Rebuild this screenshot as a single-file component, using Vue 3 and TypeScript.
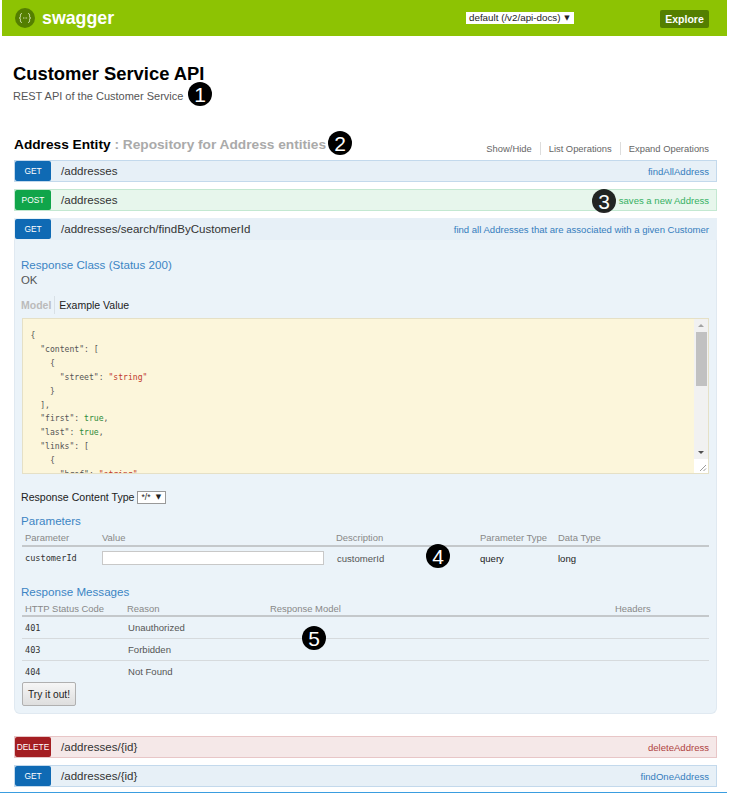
<script setup lang="ts">
type Method = 'get' | 'post' | 'delete'

interface Token {
  text: string
  kind?: 'str' | 'bool'
}

const codeLines: Token[][] = [
  [{ text: '{' }],
  [{ text: '  "content": [' }],
  [{ text: '    {' }],
  [{ text: '      "street": ' }, { text: '"string"', kind: 'str' }],
  [{ text: '    }' }],
  [{ text: '  ],' }],
  [{ text: '  "first": ' }, { text: 'true', kind: 'bool' }, { text: ',' }],
  [{ text: '  "last": ' }, { text: 'true', kind: 'bool' }, { text: ',' }],
  [{ text: '  "links": [' }],
  [{ text: '    {' }],
  [{ text: '      "href": ' }, { text: '"string"', kind: 'str' }],
]

const messages = [
  { code: '401', reason: 'Unauthorized' },
  { code: '403', reason: 'Forbidden' },
  { code: '404', reason: 'Not Found' },
]

const topOps: { method: Method; path: string; summary: string; mark?: string }[] = [
  { method: 'get', path: '/addresses', summary: 'findAllAddress' },
  { method: 'post', path: '/addresses', summary: 'saves a new Address', mark: '3' },
]
</script>

<template>
  <div class="page">
    <header class="topbar">
      <div class="brand">
        <span class="logo">
          <svg width="20" height="20" viewBox="0 0 20 20">
            <circle cx="10" cy="10" r="10" fill="#547f00" />
            <path
              d="M7 5.6c-1.4 0-1.6.7-1.6 1.7v1.4c0 .8-.4 1.2-1 1.3.6.1 1 .5 1 1.3v1.4c0 1 .2 1.7 1.6 1.7M13 5.6c1.4 0 1.6.7 1.6 1.7v1.4c0 .8.4 1.2 1 1.3-.6.1-1 .5-1 1.3v1.4c0 1-.2 1.7-1.6 1.7"
              fill="none"
              stroke="#e4efcb"
              stroke-width="0.9"
            />
            <path d="M8 10h.9M9.6 10h.9M11.2 10h.9" stroke="#e4efcb" stroke-width="0.9" />
          </svg>
        </span>
        <span class="brand-name">swagger</span>
      </div>
      <div class="spec-select">default (/v2/api-docs) <span class="arrow">▼</span></div>
      <div class="explore">Explore</div>
    </header>

    <section class="info">
      <h1>Customer Service API</h1>
      <p>REST API of the Customer Service <span class="mark mark-info">1</span></p>
    </section>

    <section class="resource">
      <div class="resource-head">
        <h2>
          Address Entity <span class="resource-desc">: Repository for Address entities</span>
          <span class="mark mark-head">2</span>
        </h2>
        <ul class="resource-links">
          <li>Show/Hide</li>
          <li>List Operations</li>
          <li>Expand Operations</li>
        </ul>
      </div>

      <div v-for="op in topOps" :key="op.method" class="op-row" :class="op.method">
        <span class="verb">{{ op.method.toUpperCase() }}</span>
        <span class="path">{{ op.path }}</span>
        <span class="summary">
          <span v-if="op.mark" class="mark mark-op">{{ op.mark }}</span>
          {{ op.summary }}
        </span>
      </div>

      <div class="op-row get expanded">
        <span class="verb">GET</span>
        <span class="path">/addresses/search/findByCustomerId</span>
        <span class="summary">find all Addresses that are associated with a given Customer</span>
      </div>
      <div class="panel">
        <h4 class="first-title">Response Class (Status 200)</h4>
        <div class="ok">OK</div>
        <div class="model-tabs">
          <span class="tab-off">Model</span>
          <span class="tab-on">Example Value</span>
        </div>
        <div class="sample">
          <pre class="code"><template v-for="(line, i) in codeLines" :key="i"><span v-for="(t, j) in line" :key="j" :class="t.kind">{{ t.text }}</span>{{ '\n' }}</template></pre>
          <div class="scrollbar">
            <span class="sb-up"></span>
            <div class="sb-track"><div class="sb-thumb"></div></div>
            <span class="sb-down"></span>
            <div class="sb-corner">
              <svg width="13" height="13" viewBox="0 0 13 13">
                <path d="M6 12l6-6M9.5 12l2.5-2.5" stroke="#9a9a9a" stroke-width="1" />
              </svg>
            </div>
          </div>
        </div>
        <div class="content-type">
          Response Content Type
          <span class="mini-select">*/* <span class="arrow">▼</span></span>
        </div>

        <h4 class="params-title">Parameters</h4>
        <div class="table-wrap">
          <table class="params">
            <thead>
              <tr>
                <th>Parameter</th>
                <th>Value</th>
                <th>Description</th>
                <th>Parameter Type</th>
                <th>Data Type</th>
              </tr>
            </thead>
            <tbody>
              <tr>
                <td class="mono">customerId</td>
                <td><input class="value-input" type="text" aria-label="customerId" /></td>
                <td class="cell-desc">customerId</td>
                <td class="cell-dark">query</td>
                <td class="cell-dark">long</td>
              </tr>
            </tbody>
          </table>
          <span class="mark mark-params">4</span>
        </div>

        <h4 class="messages-title">Response Messages</h4>
        <div class="table-wrap">
          <table class="responses">
            <thead>
              <tr>
                <th>HTTP Status Code</th>
                <th>Reason</th>
                <th>Response Model</th>
                <th>Headers</th>
              </tr>
            </thead>
            <tbody>
              <tr v-for="m in messages" :key="m.code">
                <td class="mono">{{ m.code }}</td>
                <td class="cell-reason">{{ m.reason }}</td>
                <td></td>
                <td></td>
              </tr>
            </tbody>
          </table>
          <span class="mark mark-messages">5</span>
        </div>
        <button class="try" type="button">Try it out!</button>
      </div>

      <div class="op-row delete after-panel">
        <span class="verb">DELETE</span>
        <span class="path">/addresses/{id}</span>
        <span class="summary">deleteAddress</span>
      </div>
      <div class="op-row get">
        <span class="verb">GET</span>
        <span class="path">/addresses/{id}</span>
        <span class="summary">findOneAddress</span>
      </div>
    </section>
    <div class="bottom-line"></div>
  </div>
</template>

<style>
html,
body {
  background: #fff;
  overflow: hidden;
}
</style>

<style scoped>
.page {
  width: 731px;
  height: 793px;
  overflow: hidden;
  position: relative;
  font-family: 'Liberation Sans', Arial, sans-serif;
  color: #333;
}

.topbar {
  margin-left: 2px;
  width: 725px;
  height: 36px;
  background: #8dc303;
  display: flex;
  align-items: center;
}

.brand {
  display: flex;
  align-items: center;
  margin-left: 13px;
  width: 451px;
}

.logo {
  display: flex;
  margin-right: 7px;
}

.brand-name {
  color: #fff;
  font-size: 17.8px;
  font-weight: 700;
}

.spec-select {
  width: 108px;
  height: 12px;
  margin-top: -1px;
  background: #fff;
  font-size: 9.8px;
  line-height: 12px;
  color: #222;
  padding-left: 3px;
  box-sizing: border-box;
  white-space: nowrap;
}

.arrow {
  margin-left: 1px;
  font-family: 'DejaVu Sans', sans-serif;
  font-size: 7px;
  vertical-align: 1px;
}

.explore {
  margin-left: 86px;
  width: 49px;
  height: 18px;
  margin-top: 1px;
  border-radius: 2px;
  background: #547f00;
  color: #fff;
  font-size: 10.5px;
  font-weight: 700;
  line-height: 18px;
  text-align: center;
}

.info {
  padding: 28px 0 0 13px;
}

.info h1 {
  margin: 0;
  font-size: 18.4px;
  line-height: 20px;
  font-weight: 700;
  color: #000;
}

.info p {
  margin: 5px 0 0;
  font-size: 11px;
  line-height: 14px;
  color: #555;
}

.mark {
  display: inline-flex;
  align-items: center;
  justify-content: center;
  width: 24px;
  height: 24px;
  border-radius: 50%;
  background: #000;
  color: #fff;
  font-family: 'Liberation Sans', Arial, sans-serif;
  font-size: 21px;
  font-weight: 400;
  line-height: 1;
}

.mark-info {
  position: absolute;
  left: 188px;
  top: 82px;
}

.resource {
  margin: 0 14px;
  width: 703px;
  padding-top: 28px;
}

.resource-head {
  display: flex;
  justify-content: space-between;
  align-items: flex-end;
  height: 23px;
  padding-bottom: 6px;
}

.resource-head h2 {
  margin: 0;
  font-size: 13.7px;
  line-height: 18px;
  font-weight: 700;
  color: #000;
  white-space: nowrap;
}

.resource-desc {
  color: #aaa;
}

.mark-head {
  position: absolute;
  left: 328px;
  top: 131px;
}

.resource-links {
  display: flex;
  list-style: none;
  margin: 0 8px -1px 0;
  padding: 0;
  font-size: 9.4px;
  line-height: 13px;
  color: #666;
}

.resource-links li {
  padding: 0 8px;
  border-right: 1px solid #ddd;
}

.resource-links li:last-child {
  padding-right: 0;
  border-right: 0;
}

.op-row {
  display: flex;
  align-items: center;
  box-sizing: border-box;
  height: 22px;
  margin-bottom: 7px;
  border: 1px solid;
  position: relative;
}

.op-row.get {
  background: #e7f0f7;
  border-color: #c3d9ec;
  color: #0f6ab4;
}

.op-row.post {
  background: #e7f6ec;
  border-color: #c3e8d1;
  color: #10a54a;
}

.op-row.delete {
  background: #f5e8e8;
  border-color: #e8c6c7;
  color: #a41e22;
}

.op-row.expanded {
  margin-bottom: 0;
  border-color: #e7f0f7;
}

.op-row.after-panel {
  margin-top: 22px;
}

.verb {
  width: 36px;
  height: 20px;
  flex: none;
  box-sizing: border-box;
  border-radius: 2px;
  font-size: 8.4px;
  line-height: 20px;
  text-align: center;
  color: #fff;
}

.get .verb {
  background: #0f6ab4;
}

.post .verb {
  background: #10a54a;
}

.delete .verb {
  background: #a41e22;
}

.path {
  margin-left: 10px;
  font-size: 11.55px;
  color: #333;
}

.summary {
  margin-left: auto;
  margin-right: 7px;
  font-size: 9.55px;
  opacity: 0.85;
}

.mark-op {
  position: absolute;
  left: 577px;
  top: -1px;
}

.panel {
  box-sizing: border-box;
  height: 474px;
  padding: 0 7px;
  background: #ebf3f9;
  border: 1px solid #e0e9f1;
  border-top: 0;
  border-radius: 0 0 6px 6px;
}

h4 {
  margin: 0 0 0 -1px;
  font-size: 11.6px;
  line-height: 14px;
  font-weight: 400;
  color: #3c85c4;
}

.first-title {
  padding-top: 18px;
}

.ok {
  margin-top: 1px;
  margin-left: -1px;
  font-size: 11.4px;
  line-height: 14px;
  color: #555;
}

.model-tabs {
  display: flex;
  align-items: center;
  margin-top: 9px;
  margin-left: -1px;
  height: 18px;
  font-size: 10.5px;
}

.tab-off {
  color: #bbb;
  font-weight: 700;
  padding-right: 3px;
  border-right: 1px solid #d8e0e6;
  line-height: 18px;
}

.tab-on {
  color: #222;
  padding-left: 4px;
}

.sample {
  display: flex;
  box-sizing: border-box;
  margin-top: 4px;
  width: 687px;
  height: 156px;
  background: #fcf6db;
  border: 1px solid #e5e0c6;
  overflow: hidden;
}

.code {
  flex: 1;
  margin: 0;
  padding: 10px 0 0 7.5px;
  font-family: 'DejaVu Sans Mono', 'Liberation Mono', monospace;
  font-size: 8.1px;
  line-height: 13.9px;
  color: #555;
  height: 144px;
  overflow: hidden;
}

.code .str {
  color: #c0392b;
}

.code .bool {
  color: #2e8b3a;
}

.scrollbar {
  flex: none;
  width: 14px;
  display: flex;
  flex-direction: column;
  align-items: center;
  background: #f1f1f1;
}

.sb-up,
.sb-down {
  flex: none;
  width: 0;
  height: 0;
  margin: 5px 0;
  border-left: 3px solid transparent;
  border-right: 3px solid transparent;
}

.sb-up {
  border-bottom: 3px solid #a3a3a3;
}

.sb-down {
  border-top: 3px solid #505050;
}

.sb-track {
  flex: 1;
  width: 100%;
}

.sb-thumb {
  width: 11px;
  height: 54px;
  margin: 0 auto;
  background: #c1c1c1;
}

.sb-corner {
  flex: none;
  width: 14px;
  height: 14px;
  background: #fff;
}

.sb-corner svg {
  display: block;
}

.content-type {
  display: flex;
  align-items: center;
  gap: 3px;
  margin-top: 16px;
  margin-left: -1px;
  height: 14px;
  font-size: 10.6px;
  color: #222;
}

.mini-select {
  box-sizing: border-box;
  width: 29px;
  height: 13px;
  padding-left: 3px;
  border: 1px solid #999;
  background: #fff;
  font-size: 8.5px;
  line-height: 11px;
}

.mini-select .arrow {
  margin-left: 3px;
}

.params-title {
  margin-top: 10px;
  margin-bottom: 2px;
}

.table-wrap {
  position: relative;
}

table {
  width: 100%;
  table-layout: fixed;
  border-collapse: collapse;
}

th {
  box-sizing: border-box;
  height: 16px;
  padding: 0 0 0 3px;
  border-bottom: 2px solid #c4c8cb;
  text-align: left;
  font-size: 9.45px;
  line-height: 12px;
  font-weight: 400;
  color: #888;
}

td {
  padding: 0 0 0 3px;
  font-size: 9.55px;
  color: #555;
}

.params th:nth-child(1) {
  width: 77px;
}

.params th:nth-child(2) {
  width: 234px;
}

.params th:nth-child(3) {
  width: 144px;
}

.params th:nth-child(4) {
  width: 78px;
}

.params td {
  height: 22px;
}

.mono {
  font-family: 'DejaVu Sans Mono', 'Liberation Mono', monospace;
  font-size: 8.6px;
  color: #333;
}

.value-input {
  display: block;
  box-sizing: border-box;
  width: 222px;
  height: 14px;
  margin: 0;
  border: 1px solid #c8c8c8;
  background: #fff;
  padding: 0;
  outline: 0;
}

.cell-desc {
  padding-left: 4px;
}

.cell-dark {
  color: #222;
}

.messages-title {
  margin-top: 16px;
  margin-bottom: 2px;
}

.responses th {
  height: 15px;
  padding-top: 1px;
}

.responses th:nth-child(1) {
  width: 102px;
}

.responses th:nth-child(2) {
  width: 143px;
}

.responses th:nth-child(3) {
  width: 345px;
}

.responses td {
  height: 21px;
  border-bottom: 1px solid #d6dadd;
}

.responses tr:last-child td {
  border-bottom: 0;
}

.cell-reason {
  padding-left: 4px;
}

.mark-params {
  position: absolute;
  left: 404px;
  top: 14px;
}

.mark-messages {
  position: absolute;
  left: 280px;
  top: 25px;
}

.try {
  display: block;
  box-sizing: border-box;
  width: 54px;
  height: 24px;
  margin-top: 0;
  padding: 0;
  border: 1px solid #b0b0b0;
  border-radius: 2px;
  background: linear-gradient(#f6f6f6, #dedede);
  font-family: inherit;
  font-size: 10.2px;
  color: #222;
}

.bottom-line {
  position: absolute;
  left: 0;
  top: 792px;
  width: 727px;
  height: 1px;
  background: #3a9de0;
}
</style>
